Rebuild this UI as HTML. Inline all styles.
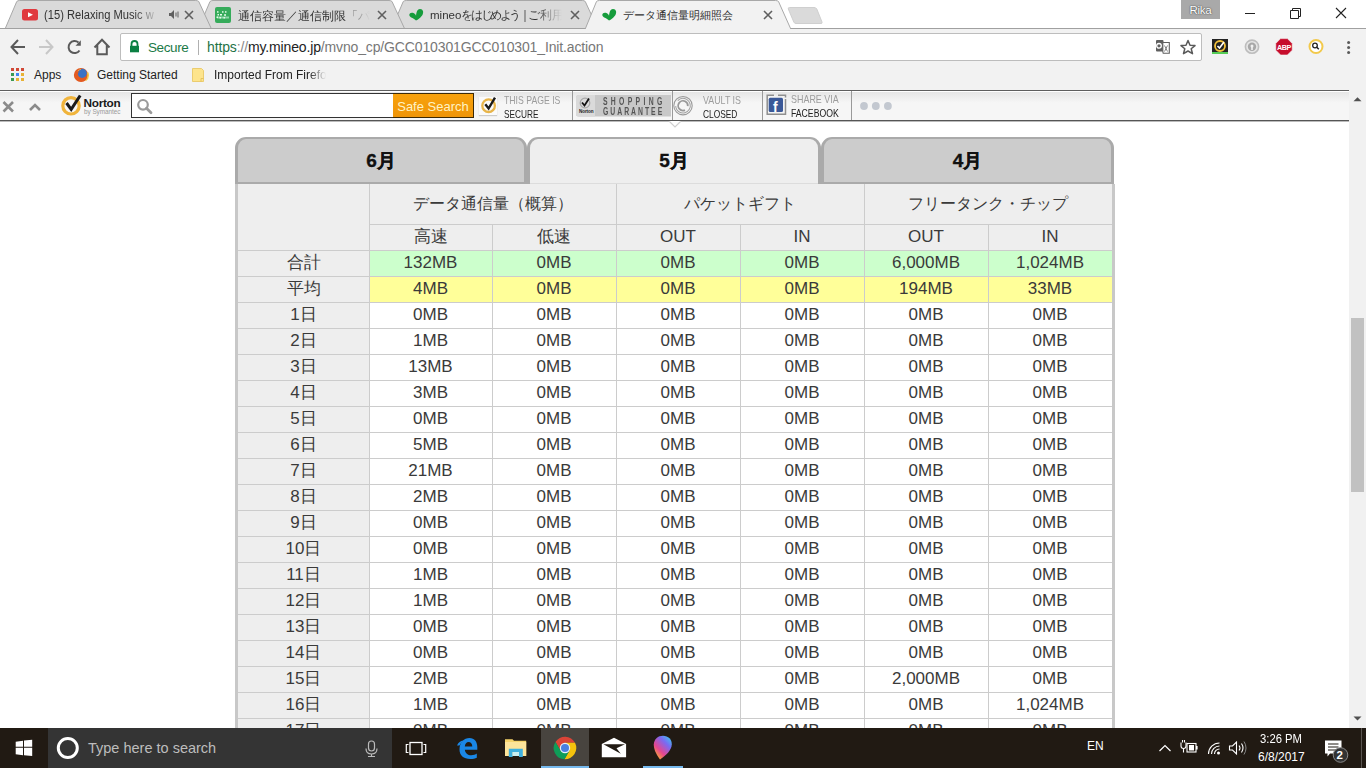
<!DOCTYPE html>
<html><head><meta charset="utf-8"><style>
*{margin:0;padding:0;box-sizing:border-box}
html,body{width:1366px;height:768px;overflow:hidden;background:#fff;font-family:"Liberation Sans", sans-serif}
.a{position:absolute}
.c{position:absolute;text-align:center;white-space:nowrap;color:#3a3a3a}
</style></head>
<body>
<div class="a" style="left:0;top:90px;width:1349px;height:638px;background:#fff"></div>
<div class="a" style="left:1349px;top:90px;width:17px;height:638px;background:#f1f1f1"></div>
<div class="a" style="left:1351px;top:318px;width:13px;height:174px;background:#c1c1c1"></div>
<div class="a" style="left:236px;top:184px;width:878px;height:66px;background:#eeeeee"></div>
<div class="a" style="left:238px;top:250px;width:131px;height:26px;background:#eeeeee"></div>
<div class="a" style="left:369px;top:250px;width:743px;height:26px;background:#ccffcc"></div>
<div class="a" style="left:238px;top:276px;width:131px;height:26px;background:#eeeeee"></div>
<div class="a" style="left:369px;top:276px;width:743px;height:26px;background:#ffff99"></div>
<div class="a" style="left:238px;top:302px;width:131px;height:26px;background:#eeeeee"></div>
<div class="a" style="left:369px;top:302px;width:743px;height:26px;background:#ffffff"></div>
<div class="a" style="left:238px;top:328px;width:131px;height:26px;background:#eeeeee"></div>
<div class="a" style="left:369px;top:328px;width:743px;height:26px;background:#ffffff"></div>
<div class="a" style="left:238px;top:354px;width:131px;height:26px;background:#eeeeee"></div>
<div class="a" style="left:369px;top:354px;width:743px;height:26px;background:#ffffff"></div>
<div class="a" style="left:238px;top:380px;width:131px;height:26px;background:#eeeeee"></div>
<div class="a" style="left:369px;top:380px;width:743px;height:26px;background:#ffffff"></div>
<div class="a" style="left:238px;top:406px;width:131px;height:26px;background:#eeeeee"></div>
<div class="a" style="left:369px;top:406px;width:743px;height:26px;background:#ffffff"></div>
<div class="a" style="left:238px;top:432px;width:131px;height:26px;background:#eeeeee"></div>
<div class="a" style="left:369px;top:432px;width:743px;height:26px;background:#ffffff"></div>
<div class="a" style="left:238px;top:458px;width:131px;height:26px;background:#eeeeee"></div>
<div class="a" style="left:369px;top:458px;width:743px;height:26px;background:#ffffff"></div>
<div class="a" style="left:238px;top:484px;width:131px;height:26px;background:#eeeeee"></div>
<div class="a" style="left:369px;top:484px;width:743px;height:26px;background:#ffffff"></div>
<div class="a" style="left:238px;top:510px;width:131px;height:26px;background:#eeeeee"></div>
<div class="a" style="left:369px;top:510px;width:743px;height:26px;background:#ffffff"></div>
<div class="a" style="left:238px;top:536px;width:131px;height:26px;background:#eeeeee"></div>
<div class="a" style="left:369px;top:536px;width:743px;height:26px;background:#ffffff"></div>
<div class="a" style="left:238px;top:562px;width:131px;height:26px;background:#eeeeee"></div>
<div class="a" style="left:369px;top:562px;width:743px;height:26px;background:#ffffff"></div>
<div class="a" style="left:238px;top:588px;width:131px;height:26px;background:#eeeeee"></div>
<div class="a" style="left:369px;top:588px;width:743px;height:26px;background:#ffffff"></div>
<div class="a" style="left:238px;top:614px;width:131px;height:26px;background:#eeeeee"></div>
<div class="a" style="left:369px;top:614px;width:743px;height:26px;background:#ffffff"></div>
<div class="a" style="left:238px;top:640px;width:131px;height:26px;background:#eeeeee"></div>
<div class="a" style="left:369px;top:640px;width:743px;height:26px;background:#ffffff"></div>
<div class="a" style="left:238px;top:666px;width:131px;height:26px;background:#eeeeee"></div>
<div class="a" style="left:369px;top:666px;width:743px;height:26px;background:#ffffff"></div>
<div class="a" style="left:238px;top:692px;width:131px;height:26px;background:#eeeeee"></div>
<div class="a" style="left:369px;top:692px;width:743px;height:26px;background:#ffffff"></div>
<div class="a" style="left:238px;top:718px;width:131px;height:26px;background:#eeeeee"></div>
<div class="a" style="left:369px;top:718px;width:743px;height:26px;background:#ffffff"></div>
<div class="a" style="left:238px;top:250px;width:874px;height:1px;background:#cccccc"></div>
<div class="a" style="left:238px;top:276px;width:874px;height:1px;background:#cccccc"></div>
<div class="a" style="left:238px;top:302px;width:874px;height:1px;background:#cccccc"></div>
<div class="a" style="left:238px;top:328px;width:874px;height:1px;background:#cccccc"></div>
<div class="a" style="left:238px;top:354px;width:874px;height:1px;background:#cccccc"></div>
<div class="a" style="left:238px;top:380px;width:874px;height:1px;background:#cccccc"></div>
<div class="a" style="left:238px;top:406px;width:874px;height:1px;background:#cccccc"></div>
<div class="a" style="left:238px;top:432px;width:874px;height:1px;background:#cccccc"></div>
<div class="a" style="left:238px;top:458px;width:874px;height:1px;background:#cccccc"></div>
<div class="a" style="left:238px;top:484px;width:874px;height:1px;background:#cccccc"></div>
<div class="a" style="left:238px;top:510px;width:874px;height:1px;background:#cccccc"></div>
<div class="a" style="left:238px;top:536px;width:874px;height:1px;background:#cccccc"></div>
<div class="a" style="left:238px;top:562px;width:874px;height:1px;background:#cccccc"></div>
<div class="a" style="left:238px;top:588px;width:874px;height:1px;background:#cccccc"></div>
<div class="a" style="left:238px;top:614px;width:874px;height:1px;background:#cccccc"></div>
<div class="a" style="left:238px;top:640px;width:874px;height:1px;background:#cccccc"></div>
<div class="a" style="left:238px;top:666px;width:874px;height:1px;background:#cccccc"></div>
<div class="a" style="left:238px;top:692px;width:874px;height:1px;background:#cccccc"></div>
<div class="a" style="left:238px;top:718px;width:874px;height:1px;background:#cccccc"></div>
<div class="a" style="left:369px;top:224px;width:743px;height:1px;background:#cccccc"></div>
<div class="a" style="left:369px;top:184px;width:1px;height:544px;background:#cccccc"></div>
<div class="a" style="left:492px;top:224px;width:1px;height:504px;background:#cccccc"></div>
<div class="a" style="left:616px;top:184px;width:1px;height:544px;background:#cccccc"></div>
<div class="a" style="left:740px;top:224px;width:1px;height:504px;background:#cccccc"></div>
<div class="a" style="left:864px;top:184px;width:1px;height:544px;background:#cccccc"></div>
<div class="a" style="left:988px;top:224px;width:1px;height:504px;background:#cccccc"></div>
<div class="a" style="left:235px;top:184px;width:3px;height:544px;background:#c8c8c8"></div>
<div class="a" style="left:1112px;top:184px;width:3px;height:544px;background:#c8c8c8"></div>
<div class="a" style="left:235px;top:137px;width:292px;height:47px;background:#cccccc;border:3px solid #aaaaaa;border-top-width:2px;border-bottom-width:2px;border-radius:11px 11px 0 0"></div>
<div class="c" style="left:235px;top:149px;width:292px;font-size:19px;line-height:24px;font-weight:bold;color:#111;-webkit-text-stroke:0.35px #111">6月</div>
<div class="a" style="left:527px;top:137px;width:294px;height:47px;background:#eeeeee;border:3px solid #aaaaaa;border-top-width:2px;border-bottom:none;border-radius:11px 11px 0 0"></div>
<div class="a" style="left:530px;top:183px;width:288px;height:1px;background:#dcdcdc"></div>
<div class="c" style="left:527px;top:149px;width:294px;font-size:19px;line-height:24px;font-weight:bold;color:#111;-webkit-text-stroke:0.35px #111">5月</div>
<div class="a" style="left:821px;top:137px;width:293px;height:47px;background:#cccccc;border:3px solid #aaaaaa;border-top-width:2px;border-bottom-width:2px;border-radius:11px 11px 0 0"></div>
<div class="c" style="left:821px;top:149px;width:293px;font-size:19px;line-height:24px;font-weight:bold;color:#111;-webkit-text-stroke:0.35px #111">4月</div>
<div class="c" style="left:369px;top:184px;width:247px;height:40px;line-height:40px;font-size:16px;">データ通信量（概算）</div>
<div class="c" style="left:616px;top:184px;width:248px;height:40px;line-height:40px;font-size:16px;">パケットギフト</div>
<div class="c" style="left:864px;top:184px;width:248px;height:40px;line-height:40px;font-size:16px;">フリータンク・チップ</div>
<div class="c" style="left:369px;top:224px;width:123px;height:26px;line-height:26px;font-size:17px;">高速</div>
<div class="c" style="left:492px;top:224px;width:124px;height:26px;line-height:26px;font-size:17px;">低速</div>
<div class="c" style="left:616px;top:224px;width:124px;height:26px;line-height:26px;font-size:17px;">OUT</div>
<div class="c" style="left:740px;top:224px;width:124px;height:26px;line-height:26px;font-size:17px;">IN</div>
<div class="c" style="left:864px;top:224px;width:124px;height:26px;line-height:26px;font-size:17px;">OUT</div>
<div class="c" style="left:988px;top:224px;width:124px;height:26px;line-height:26px;font-size:17px;">IN</div>
<div class="c" style="left:238px;top:250px;width:131px;height:26px;line-height:26px;font-size:17px;">合計</div>
<div class="c" style="left:369px;top:250px;width:123px;height:26px;line-height:26px;font-size:17px;">132MB</div>
<div class="c" style="left:492px;top:250px;width:124px;height:26px;line-height:26px;font-size:17px;">0MB</div>
<div class="c" style="left:616px;top:250px;width:124px;height:26px;line-height:26px;font-size:17px;">0MB</div>
<div class="c" style="left:740px;top:250px;width:124px;height:26px;line-height:26px;font-size:17px;">0MB</div>
<div class="c" style="left:864px;top:250px;width:124px;height:26px;line-height:26px;font-size:17px;">6,000MB</div>
<div class="c" style="left:988px;top:250px;width:124px;height:26px;line-height:26px;font-size:17px;">1,024MB</div>
<div class="c" style="left:238px;top:276px;width:131px;height:26px;line-height:26px;font-size:17px;">平均</div>
<div class="c" style="left:369px;top:276px;width:123px;height:26px;line-height:26px;font-size:17px;">4MB</div>
<div class="c" style="left:492px;top:276px;width:124px;height:26px;line-height:26px;font-size:17px;">0MB</div>
<div class="c" style="left:616px;top:276px;width:124px;height:26px;line-height:26px;font-size:17px;">0MB</div>
<div class="c" style="left:740px;top:276px;width:124px;height:26px;line-height:26px;font-size:17px;">0MB</div>
<div class="c" style="left:864px;top:276px;width:124px;height:26px;line-height:26px;font-size:17px;">194MB</div>
<div class="c" style="left:988px;top:276px;width:124px;height:26px;line-height:26px;font-size:17px;">33MB</div>
<div class="c" style="left:238px;top:302px;width:131px;height:26px;line-height:26px;font-size:17px;">1日</div>
<div class="c" style="left:369px;top:302px;width:123px;height:26px;line-height:26px;font-size:17px;">0MB</div>
<div class="c" style="left:492px;top:302px;width:124px;height:26px;line-height:26px;font-size:17px;">0MB</div>
<div class="c" style="left:616px;top:302px;width:124px;height:26px;line-height:26px;font-size:17px;">0MB</div>
<div class="c" style="left:740px;top:302px;width:124px;height:26px;line-height:26px;font-size:17px;">0MB</div>
<div class="c" style="left:864px;top:302px;width:124px;height:26px;line-height:26px;font-size:17px;">0MB</div>
<div class="c" style="left:988px;top:302px;width:124px;height:26px;line-height:26px;font-size:17px;">0MB</div>
<div class="c" style="left:238px;top:328px;width:131px;height:26px;line-height:26px;font-size:17px;">2日</div>
<div class="c" style="left:369px;top:328px;width:123px;height:26px;line-height:26px;font-size:17px;">1MB</div>
<div class="c" style="left:492px;top:328px;width:124px;height:26px;line-height:26px;font-size:17px;">0MB</div>
<div class="c" style="left:616px;top:328px;width:124px;height:26px;line-height:26px;font-size:17px;">0MB</div>
<div class="c" style="left:740px;top:328px;width:124px;height:26px;line-height:26px;font-size:17px;">0MB</div>
<div class="c" style="left:864px;top:328px;width:124px;height:26px;line-height:26px;font-size:17px;">0MB</div>
<div class="c" style="left:988px;top:328px;width:124px;height:26px;line-height:26px;font-size:17px;">0MB</div>
<div class="c" style="left:238px;top:354px;width:131px;height:26px;line-height:26px;font-size:17px;">3日</div>
<div class="c" style="left:369px;top:354px;width:123px;height:26px;line-height:26px;font-size:17px;">13MB</div>
<div class="c" style="left:492px;top:354px;width:124px;height:26px;line-height:26px;font-size:17px;">0MB</div>
<div class="c" style="left:616px;top:354px;width:124px;height:26px;line-height:26px;font-size:17px;">0MB</div>
<div class="c" style="left:740px;top:354px;width:124px;height:26px;line-height:26px;font-size:17px;">0MB</div>
<div class="c" style="left:864px;top:354px;width:124px;height:26px;line-height:26px;font-size:17px;">0MB</div>
<div class="c" style="left:988px;top:354px;width:124px;height:26px;line-height:26px;font-size:17px;">0MB</div>
<div class="c" style="left:238px;top:380px;width:131px;height:26px;line-height:26px;font-size:17px;">4日</div>
<div class="c" style="left:369px;top:380px;width:123px;height:26px;line-height:26px;font-size:17px;">3MB</div>
<div class="c" style="left:492px;top:380px;width:124px;height:26px;line-height:26px;font-size:17px;">0MB</div>
<div class="c" style="left:616px;top:380px;width:124px;height:26px;line-height:26px;font-size:17px;">0MB</div>
<div class="c" style="left:740px;top:380px;width:124px;height:26px;line-height:26px;font-size:17px;">0MB</div>
<div class="c" style="left:864px;top:380px;width:124px;height:26px;line-height:26px;font-size:17px;">0MB</div>
<div class="c" style="left:988px;top:380px;width:124px;height:26px;line-height:26px;font-size:17px;">0MB</div>
<div class="c" style="left:238px;top:406px;width:131px;height:26px;line-height:26px;font-size:17px;">5日</div>
<div class="c" style="left:369px;top:406px;width:123px;height:26px;line-height:26px;font-size:17px;">0MB</div>
<div class="c" style="left:492px;top:406px;width:124px;height:26px;line-height:26px;font-size:17px;">0MB</div>
<div class="c" style="left:616px;top:406px;width:124px;height:26px;line-height:26px;font-size:17px;">0MB</div>
<div class="c" style="left:740px;top:406px;width:124px;height:26px;line-height:26px;font-size:17px;">0MB</div>
<div class="c" style="left:864px;top:406px;width:124px;height:26px;line-height:26px;font-size:17px;">0MB</div>
<div class="c" style="left:988px;top:406px;width:124px;height:26px;line-height:26px;font-size:17px;">0MB</div>
<div class="c" style="left:238px;top:432px;width:131px;height:26px;line-height:26px;font-size:17px;">6日</div>
<div class="c" style="left:369px;top:432px;width:123px;height:26px;line-height:26px;font-size:17px;">5MB</div>
<div class="c" style="left:492px;top:432px;width:124px;height:26px;line-height:26px;font-size:17px;">0MB</div>
<div class="c" style="left:616px;top:432px;width:124px;height:26px;line-height:26px;font-size:17px;">0MB</div>
<div class="c" style="left:740px;top:432px;width:124px;height:26px;line-height:26px;font-size:17px;">0MB</div>
<div class="c" style="left:864px;top:432px;width:124px;height:26px;line-height:26px;font-size:17px;">0MB</div>
<div class="c" style="left:988px;top:432px;width:124px;height:26px;line-height:26px;font-size:17px;">0MB</div>
<div class="c" style="left:238px;top:458px;width:131px;height:26px;line-height:26px;font-size:17px;">7日</div>
<div class="c" style="left:369px;top:458px;width:123px;height:26px;line-height:26px;font-size:17px;">21MB</div>
<div class="c" style="left:492px;top:458px;width:124px;height:26px;line-height:26px;font-size:17px;">0MB</div>
<div class="c" style="left:616px;top:458px;width:124px;height:26px;line-height:26px;font-size:17px;">0MB</div>
<div class="c" style="left:740px;top:458px;width:124px;height:26px;line-height:26px;font-size:17px;">0MB</div>
<div class="c" style="left:864px;top:458px;width:124px;height:26px;line-height:26px;font-size:17px;">0MB</div>
<div class="c" style="left:988px;top:458px;width:124px;height:26px;line-height:26px;font-size:17px;">0MB</div>
<div class="c" style="left:238px;top:484px;width:131px;height:26px;line-height:26px;font-size:17px;">8日</div>
<div class="c" style="left:369px;top:484px;width:123px;height:26px;line-height:26px;font-size:17px;">2MB</div>
<div class="c" style="left:492px;top:484px;width:124px;height:26px;line-height:26px;font-size:17px;">0MB</div>
<div class="c" style="left:616px;top:484px;width:124px;height:26px;line-height:26px;font-size:17px;">0MB</div>
<div class="c" style="left:740px;top:484px;width:124px;height:26px;line-height:26px;font-size:17px;">0MB</div>
<div class="c" style="left:864px;top:484px;width:124px;height:26px;line-height:26px;font-size:17px;">0MB</div>
<div class="c" style="left:988px;top:484px;width:124px;height:26px;line-height:26px;font-size:17px;">0MB</div>
<div class="c" style="left:238px;top:510px;width:131px;height:26px;line-height:26px;font-size:17px;">9日</div>
<div class="c" style="left:369px;top:510px;width:123px;height:26px;line-height:26px;font-size:17px;">0MB</div>
<div class="c" style="left:492px;top:510px;width:124px;height:26px;line-height:26px;font-size:17px;">0MB</div>
<div class="c" style="left:616px;top:510px;width:124px;height:26px;line-height:26px;font-size:17px;">0MB</div>
<div class="c" style="left:740px;top:510px;width:124px;height:26px;line-height:26px;font-size:17px;">0MB</div>
<div class="c" style="left:864px;top:510px;width:124px;height:26px;line-height:26px;font-size:17px;">0MB</div>
<div class="c" style="left:988px;top:510px;width:124px;height:26px;line-height:26px;font-size:17px;">0MB</div>
<div class="c" style="left:238px;top:536px;width:131px;height:26px;line-height:26px;font-size:17px;">10日</div>
<div class="c" style="left:369px;top:536px;width:123px;height:26px;line-height:26px;font-size:17px;">0MB</div>
<div class="c" style="left:492px;top:536px;width:124px;height:26px;line-height:26px;font-size:17px;">0MB</div>
<div class="c" style="left:616px;top:536px;width:124px;height:26px;line-height:26px;font-size:17px;">0MB</div>
<div class="c" style="left:740px;top:536px;width:124px;height:26px;line-height:26px;font-size:17px;">0MB</div>
<div class="c" style="left:864px;top:536px;width:124px;height:26px;line-height:26px;font-size:17px;">0MB</div>
<div class="c" style="left:988px;top:536px;width:124px;height:26px;line-height:26px;font-size:17px;">0MB</div>
<div class="c" style="left:238px;top:562px;width:131px;height:26px;line-height:26px;font-size:17px;">11日</div>
<div class="c" style="left:369px;top:562px;width:123px;height:26px;line-height:26px;font-size:17px;">1MB</div>
<div class="c" style="left:492px;top:562px;width:124px;height:26px;line-height:26px;font-size:17px;">0MB</div>
<div class="c" style="left:616px;top:562px;width:124px;height:26px;line-height:26px;font-size:17px;">0MB</div>
<div class="c" style="left:740px;top:562px;width:124px;height:26px;line-height:26px;font-size:17px;">0MB</div>
<div class="c" style="left:864px;top:562px;width:124px;height:26px;line-height:26px;font-size:17px;">0MB</div>
<div class="c" style="left:988px;top:562px;width:124px;height:26px;line-height:26px;font-size:17px;">0MB</div>
<div class="c" style="left:238px;top:588px;width:131px;height:26px;line-height:26px;font-size:17px;">12日</div>
<div class="c" style="left:369px;top:588px;width:123px;height:26px;line-height:26px;font-size:17px;">1MB</div>
<div class="c" style="left:492px;top:588px;width:124px;height:26px;line-height:26px;font-size:17px;">0MB</div>
<div class="c" style="left:616px;top:588px;width:124px;height:26px;line-height:26px;font-size:17px;">0MB</div>
<div class="c" style="left:740px;top:588px;width:124px;height:26px;line-height:26px;font-size:17px;">0MB</div>
<div class="c" style="left:864px;top:588px;width:124px;height:26px;line-height:26px;font-size:17px;">0MB</div>
<div class="c" style="left:988px;top:588px;width:124px;height:26px;line-height:26px;font-size:17px;">0MB</div>
<div class="c" style="left:238px;top:614px;width:131px;height:26px;line-height:26px;font-size:17px;">13日</div>
<div class="c" style="left:369px;top:614px;width:123px;height:26px;line-height:26px;font-size:17px;">0MB</div>
<div class="c" style="left:492px;top:614px;width:124px;height:26px;line-height:26px;font-size:17px;">0MB</div>
<div class="c" style="left:616px;top:614px;width:124px;height:26px;line-height:26px;font-size:17px;">0MB</div>
<div class="c" style="left:740px;top:614px;width:124px;height:26px;line-height:26px;font-size:17px;">0MB</div>
<div class="c" style="left:864px;top:614px;width:124px;height:26px;line-height:26px;font-size:17px;">0MB</div>
<div class="c" style="left:988px;top:614px;width:124px;height:26px;line-height:26px;font-size:17px;">0MB</div>
<div class="c" style="left:238px;top:640px;width:131px;height:26px;line-height:26px;font-size:17px;">14日</div>
<div class="c" style="left:369px;top:640px;width:123px;height:26px;line-height:26px;font-size:17px;">0MB</div>
<div class="c" style="left:492px;top:640px;width:124px;height:26px;line-height:26px;font-size:17px;">0MB</div>
<div class="c" style="left:616px;top:640px;width:124px;height:26px;line-height:26px;font-size:17px;">0MB</div>
<div class="c" style="left:740px;top:640px;width:124px;height:26px;line-height:26px;font-size:17px;">0MB</div>
<div class="c" style="left:864px;top:640px;width:124px;height:26px;line-height:26px;font-size:17px;">0MB</div>
<div class="c" style="left:988px;top:640px;width:124px;height:26px;line-height:26px;font-size:17px;">0MB</div>
<div class="c" style="left:238px;top:666px;width:131px;height:26px;line-height:26px;font-size:17px;">15日</div>
<div class="c" style="left:369px;top:666px;width:123px;height:26px;line-height:26px;font-size:17px;">2MB</div>
<div class="c" style="left:492px;top:666px;width:124px;height:26px;line-height:26px;font-size:17px;">0MB</div>
<div class="c" style="left:616px;top:666px;width:124px;height:26px;line-height:26px;font-size:17px;">0MB</div>
<div class="c" style="left:740px;top:666px;width:124px;height:26px;line-height:26px;font-size:17px;">0MB</div>
<div class="c" style="left:864px;top:666px;width:124px;height:26px;line-height:26px;font-size:17px;">2,000MB</div>
<div class="c" style="left:988px;top:666px;width:124px;height:26px;line-height:26px;font-size:17px;">0MB</div>
<div class="c" style="left:238px;top:692px;width:131px;height:26px;line-height:26px;font-size:17px;">16日</div>
<div class="c" style="left:369px;top:692px;width:123px;height:26px;line-height:26px;font-size:17px;">1MB</div>
<div class="c" style="left:492px;top:692px;width:124px;height:26px;line-height:26px;font-size:17px;">0MB</div>
<div class="c" style="left:616px;top:692px;width:124px;height:26px;line-height:26px;font-size:17px;">0MB</div>
<div class="c" style="left:740px;top:692px;width:124px;height:26px;line-height:26px;font-size:17px;">0MB</div>
<div class="c" style="left:864px;top:692px;width:124px;height:26px;line-height:26px;font-size:17px;">0MB</div>
<div class="c" style="left:988px;top:692px;width:124px;height:26px;line-height:26px;font-size:17px;">1,024MB</div>
<div class="c" style="left:238px;top:718px;width:131px;height:26px;line-height:26px;font-size:17px;">17日</div>
<div class="c" style="left:369px;top:718px;width:123px;height:26px;line-height:26px;font-size:17px;">0MB</div>
<div class="c" style="left:492px;top:718px;width:124px;height:26px;line-height:26px;font-size:17px;">0MB</div>
<div class="c" style="left:616px;top:718px;width:124px;height:26px;line-height:26px;font-size:17px;">0MB</div>
<div class="c" style="left:740px;top:718px;width:124px;height:26px;line-height:26px;font-size:17px;">0MB</div>
<div class="c" style="left:864px;top:718px;width:124px;height:26px;line-height:26px;font-size:17px;">0MB</div>
<div class="c" style="left:988px;top:718px;width:124px;height:26px;line-height:26px;font-size:17px;">0MB</div>
<div class="a" style="left:0;top:89px;width:1349px;height:32px;background:linear-gradient(#e4e4e4,#f6f6f6 40%,#f6f6f6);border-top:2px solid #5e5e5e;border-bottom:1px solid #555;box-shadow:0 1px 0 #bbb, inset 0 1px 0 #fff"></div>
<svg class="a" style="left:0;top:89px" width="900" height="40"><path d="M3.5,13L13,22.5M13,13L3.5,22.5" stroke="#8b8b8b" stroke-width="2.6"/><path d="M30,21L35,16L40,21" stroke="#8b8b8b" stroke-width="2.6" fill="none"/><circle cx="71" cy="16.8" r="8.2" fill="none" stroke="#f0b43c" stroke-width="3.2"/><path d="M66.5,14L71.2,20.3L80.2,6.5" stroke="#1a1a1a" stroke-width="3" fill="none" stroke-linejoin="miter"/><text x="83.5" y="18" font-family="Liberation Sans" font-weight="bold" font-size="11.8" fill="#1a1a1a" letter-spacing="-0.3">Norton</text><text x="84" y="24.8" font-family="Liberation Sans" font-size="6.4" fill="#9a9a9a" letter-spacing="-0.05">by Symantec</text><circle cx="489" cy="16.5" r="6.5" fill="none" stroke="#e8b54a" stroke-width="2.3"/><path d="M485.5,15L489,19.5L495.5,8.7" stroke="#1a1a1a" stroke-width="2.4" fill="none"/><line x1="572.5" y1="2" x2="572.5" y2="31" stroke="#9a9a9a"/><line x1="672.5" y1="2" x2="672.5" y2="31" stroke="#9a9a9a"/><line x1="762.5" y1="2" x2="762.5" y2="31" stroke="#9a9a9a"/><line x1="851.5" y1="2" x2="851.5" y2="31" stroke="#9a9a9a"/><path d="M576,8.5Q576,6 578.5,6H671V27.5H578.5Q576,27.5 576,25Z" fill="#c8c8c8"/><path d="M576,8.5Q576,6 578.5,6H595V27.5H578.5Q576,27.5 576,25Z" fill="#dadada"/><circle cx="585" cy="14" r="4.8" fill="none" stroke="#a8a8a8" stroke-width="1.2"/><path d="M582,13.5L584.5,16.5L589,9.5" stroke="#111" stroke-width="1.8" fill="none"/><text x="579" y="24.3" font-family="Liberation Sans" font-weight="bold" font-size="4.6" fill="#222" letter-spacing="-0.1">Norton</text><circle cx="683" cy="16.7" r="9.2" fill="none" stroke="#9a9a9a" stroke-width="1.1"/><circle cx="683" cy="16.7" r="7.3" fill="none" stroke="#a0a0a0" stroke-width="1" stroke-dasharray="30 6" transform="rotate(-60 683 16.7)"/><circle cx="683" cy="16.7" r="4.8" fill="none" stroke="#999" stroke-width="1.8" stroke-dasharray="20 5" transform="rotate(120 683 16.7)"/><path d="M774,6.3H767.2V25.2H785.5V10M778,6.3H785.5V8.5" stroke="#8f8f8f" stroke-width="1.5" fill="#f4f4f4"/><rect x="768.7" y="8.7" width="14.3" height="14.3" rx="1.5" fill="#3b5998"/><text x="773" y="22.5" font-family="Liberation Sans" font-weight="bold" font-size="14" fill="#fff">f</text><circle cx="864" cy="17" r="3.9" fill="#c3c8d0"/><circle cx="875.8" cy="17" r="3.9" fill="#c3c8d0"/><circle cx="887.9" cy="17" r="3.9" fill="#c3c8d0"/></svg>
<div class="a" style="left:131px;top:93px;width:263px;height:25px;background:#fff;border:1.5px solid #333"></div>
<svg class="a" style="left:136px;top:98px" width="18" height="18"><circle cx="7" cy="6.8" r="4.8" fill="none" stroke="#9a9a9a" stroke-width="2.2"/><path d="M10.5,10.3L15,14.8" stroke="#9a9a9a" stroke-width="2.8" stroke-linecap="round"/></svg>
<div class="a" style="left:393px;top:93px;width:81px;height:25px;background:linear-gradient(#f8a20c,#ef9509);border:1.5px solid #3d2a05;border-left:none;color:#fff3c4;font-size:13px;line-height:25px;text-align:center;white-space:nowrap">Safe Search</div>
<div class="a" style="left:479px;top:97px;width:18px;height:18px;background:#fbfbfb;box-shadow:0 1px 1px #ccc"></div>
<svg class="a" style="left:479px;top:89px" width="20" height="30"><circle cx="9.6" cy="16.7" r="6.3" fill="none" stroke="#e8b54a" stroke-width="2.3"/><path d="M6.3,15.3L9.6,19.5L16,8.7" stroke="#1a1a1a" stroke-width="2.4" fill="none"/></svg>
<div class="a" style="left:504px;top:94.5px;font-size:10.5px;line-height:10.5px;color:#9c9c9c;white-space:nowrap;transform:scaleX(0.829);transform-origin:0 0;">THIS PAGE IS</div>
<div class="a" style="left:504px;top:108.5px;font-size:10.5px;line-height:10.5px;color:#222;white-space:nowrap;transform:scaleX(0.787);transform-origin:0 0;">SECURE</div>
<div class="a" style="left:703px;top:94.5px;font-size:10.5px;line-height:10.5px;color:#9c9c9c;white-space:nowrap;transform:scaleX(0.846);transform-origin:0 0;">VAULT IS</div>
<div class="a" style="left:703px;top:108.5px;font-size:10.5px;line-height:10.5px;color:#222;white-space:nowrap;transform:scaleX(0.797);transform-origin:0 0;">CLOSED</div>
<div class="a" style="left:791px;top:93.5px;font-size:10.5px;line-height:10.5px;color:#9c9c9c;white-space:nowrap;transform:scaleX(0.852);transform-origin:0 0;">SHARE VIA</div>
<div class="a" style="left:791px;top:107.5px;font-size:10.5px;line-height:10.5px;color:#222;white-space:nowrap;transform:scaleX(0.826);transform-origin:0 0;">FACEBOOK</div>
<div class="a" style="left:602.6px;top:96px;font-size:10.5px;line-height:10.5px;font-weight:bold;color:#555;letter-spacing:5.1px;transform:scaleX(0.65);transform-origin:0 0;white-space:nowrap">SHOPPING</div>
<div class="a" style="left:602.6px;top:105.5px;font-size:10.5px;line-height:10.5px;font-weight:bold;color:#555;letter-spacing:3.07px;transform:scaleX(0.65);transform-origin:0 0;white-space:nowrap">GUARANTEE</div>
<svg class="a" style="left:668px;top:121px" width="14" height="8"><path d="M1,0L7,6L13,0" fill="#fff" stroke="#cfcfcf" stroke-width="1.2"/></svg>
<svg class="a" style="left:1349px;top:90px" width="17" height="638"><path d="M4.5,11.3L8.5,7.3L12.5,11.3Z" fill="#505050"/><path d="M4.5,626.5L8.5,630.5L12.5,626.5Z" fill="#505050"/></svg>
<div class="a" style="left:0;top:728px;width:1366px;height:40px;background:#211a13"></div>
<div class="a" style="left:48px;top:728px;width:344px;height:40px;background:#343434"></div>
<svg class="a" style="left:0;top:728px" width="1366" height="40"><path d="M15.7,13.7L23,12.8V18.8H15.7Z M24,12.6L32.2,11.7V18.8H24Z M15.7,19.8H23V27.2L15.7,26.3Z M24,19.8H32.2V28.1L24,27.3Z" fill="#fff"/><circle cx="67.8" cy="20" r="9.5" fill="none" stroke="#fff" stroke-width="3"/><rect x="368.5" y="13" width="6" height="10" rx="3" fill="none" stroke="#bbb" stroke-width="1.2"/><path d="M366,20.5Q366,26 371.5,26Q377,26 377,20.5M371.5,26V28.5M368,28.5H375" stroke="#bbb" stroke-width="1.2" fill="none"/><rect x="410" y="14.5" width="12" height="12" fill="none" stroke="#fff" stroke-width="1.3"/><path d="M408.5,16.5H406.3V24.5H408.5M423.5,16.5H425.7V24.5H423.5" stroke="#fff" stroke-width="1.2" fill="none"/><g transform="translate(457,9)"><path fill-rule="evenodd" d="M2.5,12.5C2.5,5.5 7,1 12.5,1C17.5,1 20.3,4.8 20.3,10V12.8H7.8C8.2,16.3 10.8,18.3 14.3,18.3C16.5,18.3 18.5,17.5 19.8,16.6V20.8C18.2,21.6 16,22 13.3,22C6.5,22 2.5,18.3 2.5,12.5Z M7.8,9.6H15.3C15.2,6.8 13.8,5.1 11.5,5.1C9.5,5.1 8.2,6.8 7.8,9.6Z" fill="#1a87e6"/><path d="M0,8.5C1.5,5 4.5,3.3 8,3.6C5.5,4.8 3.6,6.3 2.5,8.6Z" fill="#1a87e6"/></g><path d="M505,11.2H512.5L514,12.8H526.2V28H505Z" fill="#f6d36a"/><path d="M505,14H526.2V28H505Z" fill="#fde49a"/><path d="M508.8,20.8H522.8V29H519V24H512.6V29H508.8Z" fill="#3fb0de"/><rect x="512.6" y="24" width="6.4" height="4" fill="#c9eef0"/><rect x="541" y="0" width="48" height="40" fill="#48443f"/><rect x="541" y="38" width="48" height="2" fill="#76b9ed"/><path d="M565,20L560.50,22.60L555.48,13.91A11.3,11.3 0 0 1 575.03,14.80L565.00,14.80Z" fill="#db4437"/><path d="M565,20L565.00,14.80L575.03,14.80A11.3,11.3 0 0 1 564.49,31.29L569.50,22.60Z" fill="#f4c20d"/><path d="M565,20L569.50,22.60L564.49,31.29A11.3,11.3 0 0 1 555.48,13.91L560.50,22.60Z" fill="#0f9d58"/><circle cx="565" cy="20" r="5.2" fill="#e8f0f8"/><circle cx="565" cy="20" r="4" fill="#4a80e0"/><path d="M601.8,16L614,9.8L626.1,16V29.2H601.8Z" fill="#fff"/><path d="M603.4,16.2L624.9,16.2L616.5,20.2L620.8,25.8Z" fill="#211a13"/><defs><linearGradient id="p3d" x1="1" y1="0" x2="0.2" y2="1"><stop offset="0" stop-color="#30d8ee"/><stop offset="0.35" stop-color="#7a6af2"/><stop offset="0.7" stop-color="#e6458f"/><stop offset="1" stop-color="#f7b52a"/></linearGradient></defs><path d="M660,31.5C655.5,25.5 653.6,20.5 653.8,16.3C654.2,11 658,7.8 663,7.8C668.3,7.8 672,11.5 671.8,16.5C671.5,22 666.5,27 660,31.5Z" fill="url(#p3d)"/><rect x="643" y="38" width="40" height="2" fill="#76b9ed"/><path d="M1159.5,23L1165,17.5L1170.5,23" stroke="#fff" stroke-width="1.2" fill="none"/><path d="M1181,14.5V18Q1181,20.5 1183.5,20.5Q1186,20.5 1186,18V14.5M1182.5,14.5V12M1184.5,14.5V12M1183.5,20.5V24.5" stroke="#fff" stroke-width="1.1" fill="none"/><rect x="1187" y="15.5" width="9" height="8.5" fill="none" stroke="#fff" stroke-width="1.1"/><rect x="1189" y="17" width="5" height="5.5" fill="#fff"/><rect x="1196" y="18" width="1.6" height="3.5" fill="#fff"/><path d="M1208.5,26A11,11 0 0 1 1219.5,15M1211.5,26A8,8 0 0 1 1219.5,18M1214.5,26A5,5 0 0 1 1219.5,21" stroke="#fff" stroke-width="1.1" fill="none"/><circle cx="1218.5" cy="25" r="1.5" fill="#fff"/><path d="M1229.5,18H1232.5L1236.5,14V26L1232.5,22H1229.5Z" stroke="#fff" stroke-width="1.1" fill="none"/><path d="M1239,17.5Q1241,20 1239,22.5M1241.5,15.5Q1244.5,20 1241.5,24.5" stroke="#fff" stroke-width="1.1" fill="none"/><path d="M1244,13.5Q1248,20 1244,26.5" stroke="#888" stroke-width="1" fill="none"/><path d="M1325,12.5H1341.5V25.5H1330L1327.5,28.5V25.5H1325Z" fill="#fff"/><path d="M1328,16H1338.5M1328,19H1338.5M1328,22H1336" stroke="#211a13" stroke-width="1.1"/><circle cx="1340.5" cy="27" r="7.3" fill="#333" stroke="#888" stroke-width="1"/><text x="1336.6" y="31.3" font-family="Liberation Sans" font-weight="bold" font-size="11.5" fill="#fff">2</text><line x1="1361.5" y1="0" x2="1361.5" y2="40" stroke="#5a5550" stroke-width="1"/></svg>
<div class="a" style="left:88px;top:740px;font-size:14.5px;line-height:16.5px;color:#bdbdbd;white-space:nowrap;">Type here to search</div>
<div class="a" style="left:1087px;top:739px;font-size:12px;line-height:14px;color:#fff;white-space:nowrap;">EN</div>
<div class="a" style="left:1259.5px;top:731.5px;font-size:12px;line-height:14px;color:#fff;white-space:nowrap;transform:scaleX(0.94);transform-origin:0 0">3:26 PM</div>
<div class="a" style="left:1258px;top:749.5px;font-size:12px;line-height:14px;color:#fff;white-space:nowrap;">6/8/2017</div>
<div class="a" style="left:0;top:0;width:1366px;height:29px;background:#fff"></div>
<svg class="a" style="left:0;top:0" width="1366" height="29"><path d="M391.75,28.5 L403.25,1.5 Q404.25,0.5 406.25,0.5 L582.25,0.5 Q584.25,0.5 585.25,1.5 L597.75,28.5 Z" fill="#dadada" stroke="#a8a8a8" stroke-width="1"/><path d="M198.50,28.5 L210.00,1.5 Q211.00,0.5 213.00,0.5 L389.00,0.5 Q391.00,0.5 392.00,1.5 L404.50,28.5 Z" fill="#dadada" stroke="#a8a8a8" stroke-width="1"/><path d="M5.25,28.5 L16.75,1.5 Q17.75,0.5 19.75,0.5 L195.75,0.5 Q197.75,0.5 198.75,1.5 L211.25,28.5 Z" fill="#dadada" stroke="#a8a8a8" stroke-width="1"/><line x1="0" y1="28.5" x2="1366" y2="28.5" stroke="#a0a0a0" stroke-width="1"/><path d="M585.00,29.5 L596.50,1.5 Q597.50,0.5 599.50,0.5 L775.50,0.5 Q777.50,0.5 778.50,1.5 L791.00,29.5 Z" fill="#f2f2f2" stroke="#a8a8a8" stroke-width="1"/><path d="M789.5,7.5 L814,7.5 Q816,7.5 816.8,9 L822,22 Q822.5,23.5 821,23.5 L796,23.5 Q794.5,23.5 793.8,22 L788.3,9 Q787.8,7.5 789.5,7.5Z" fill="#dadada" stroke="#cfcfcf" stroke-width="1"/></svg>
<div class="a" style="left:0;top:29px;width:1366px;height:61px;background:#f2f2f2"></div>
<svg class="a" style="left:22px;top:9px" width="16" height="12"><rect x="0" y="0" width="16" height="11.5" rx="2.5" fill="#e0393e"/><path d="M6,3.2L11,5.75L6,8.3Z" fill="#fff"/></svg>
<div class="a" style="left:44px;top:6.5px;font-size:12px;line-height:16px;color:#333;white-space:nowrap;width:124px;overflow:hidden;transform:scaleX(0.93);transform-origin:0 0;-webkit-mask-image:linear-gradient(90deg,#000 78%,transparent)">(15) Relaxing Music w</div>
<svg class="a" style="left:169px;top:10px" width="10" height="9"><path d="M0,3L2,3L5,0L5,9L2,6L0,6Z" fill="#5f5f5f"/><path d="M7,2.5L7,6.5M9,1.5L9,7.5" stroke="#5f5f5f" stroke-width="1"/></svg>
<svg class="a" style="left:184px;top:10px" width="10" height="10"><path d="M1,1L9,9M9,1L1,9" stroke="#5f5f5f" stroke-width="1.6"/></svg>
<svg class="a" style="left:215px;top:7px" width="16" height="16"><rect x="0" y="0" width="16" height="16" rx="2" fill="#35ab5a"/><rect x="2" y="9.5" width="12" height="2" fill="#8fd6a8"/><g fill="#e4fbe8"><rect x="2" y="4.2" width="1.5" height="1.5"/><rect x="7" y="4.2" width="1.5" height="1.5"/><rect x="10" y="4.2" width="1.5" height="1.5"/><rect x="2.5" y="7" width="1.5" height="1.5"/><rect x="5" y="7" width="2" height="1.5"/><rect x="9.3" y="7" width="1.5" height="2"/><rect x="1.5" y="9.5" width="1.5" height="1.5"/><rect x="4.5" y="10" width="1.5" height="1.5"/><rect x="8.5" y="10" width="1.5" height="1.5"/></g></svg>
<div class="a" style="left:238px;top:7.5px;font-size:12px;line-height:16px;color:#333;white-space:nowrap;width:132px;overflow:hidden;-webkit-mask-image:linear-gradient(90deg,#000 80%,transparent)">通信容量／通信制限「パケット</div>
<svg class="a" style="left:377px;top:10px" width="10" height="10"><path d="M1,1L9,9M9,1L1,9" stroke="#5f5f5f" stroke-width="1.6"/></svg>
<svg class="a" style="left:409px;top:8px" width="15" height="14"><path d="M7,12.6C5,9.8 0.2,10 0.3,6.8C0.5,4.3 4,4 6,6.1C7.6,7.8 7.9,10.2 7,12.6Z M7.2,12.6C6.8,9 7,4.2 8.6,2.2C10.2,0.4 13.6,0.8 14.1,3.6C14.6,7.2 11,10.6 7.2,12.6Z" fill="#169c3c"/></svg>
<div class="a" style="left:430px;top:7.5px;font-size:11.5px;line-height:15.5px;color:#333;white-space:nowrap;width:132px;overflow:hidden;-webkit-mask-image:linear-gradient(90deg,#000 80%,transparent)">mineo<span style="letter-spacing:-2.4px">をはじめよう</span><span style="letter-spacing:-3px">｜</span>ご利用する</div>
<svg class="a" style="left:570px;top:10px" width="10" height="10"><path d="M1,1L9,9M9,1L1,9" stroke="#5f5f5f" stroke-width="1.6"/></svg>
<svg class="a" style="left:602px;top:8px" width="15" height="14"><path d="M7,12.6C5,9.8 0.2,10 0.3,6.8C0.5,4.3 4,4 6,6.1C7.6,7.8 7.9,10.2 7,12.6Z M7.2,12.6C6.8,9 7,4.2 8.6,2.2C10.2,0.4 13.6,0.8 14.1,3.6C14.6,7.2 11,10.6 7.2,12.6Z" fill="#169c3c"/></svg>
<div class="a" style="left:623px;top:7.5px;font-size:11px;line-height:15px;color:#333;white-space:nowrap;">データ通信量明細照会</div>
<svg class="a" style="left:763px;top:10px" width="10" height="10"><path d="M1,1L9,9M9,1L1,9" stroke="#5f5f5f" stroke-width="1.6"/></svg>
<div class="a" style="left:1181px;top:0;width:39px;height:19px;background:#a9a9a9;color:#fff;font-size:11.5px;line-height:20px;text-align:center;letter-spacing:-0.3px;text-shadow:0 0 1.5px #444,0 0 1px #555">Rika</div>
<svg class="a" style="left:1240px;top:4px" width="120" height="20"><path d="M5,9.5H15" stroke="#222" stroke-width="1"/><path d="M50.5,6.5H58.5V14.5H50.5Z M52.5,6.5V4.5H60.5V12.5H58.5" stroke="#222" stroke-width="1" fill="none"/><path d="M96,4L106,14M106,4L96,14" stroke="#222" stroke-width="1.1"/></svg>
<svg class="a" style="left:0;top:29px" width="130" height="33"><path d="M11.5,18H25M18,11L11.5,18L18,25" stroke="#5a5a5a" stroke-width="2" fill="none"/><path d="M39,18H52.5M46,11L52.5,18L46,25" stroke="#c8c8c8" stroke-width="2" fill="none"/><path d="M79.5,21.5 A6,6 0 1 1 78.5,13.5" stroke="#5a5a5a" stroke-width="2" fill="none"/><path d="M75.5,16.8L80.8,16.8L80.8,11.2Z" fill="#5a5a5a"/><path d="M94.5,18.5L102,10.8L109.5,18.5M97.3,16V25.3H106.8V16" stroke="#5a5a5a" stroke-width="2" fill="none" stroke-linejoin="miter"/></svg>
<div class="a" style="left:120px;top:33px;width:1082px;height:28px;background:#fff;border:1px solid #bdbdbd;border-radius:2px"></div>
<svg class="a" style="left:129px;top:40px" width="11" height="13"><path d="M2.5,6V4A3,3 0 0 1 8.5,4V6" stroke="#0b8043" stroke-width="1.8" fill="none"/><rect x="1" y="5.8" width="9" height="6.5" fill="#0b8043"/></svg>
<div class="a" style="left:148px;top:39px;font-size:13.5px;line-height:17.5px;color:#1b7a47;white-space:nowrap;line-height:17px;letter-spacing:-0.4px">Secure</div>
<div class="a" style="left:198px;top:40px;width:1px;height:15px;background:#b0b0b0"></div>
<div class="a" style="left:207px;top:39px;font-size:14px;line-height:18px;color:#333;white-space:nowrap;line-height:17px;letter-spacing:-0.14px"><span style="color:#1f7346">https</span><span style="color:#888">://</span><span style="color:#222">my.mineo.jp</span><span style="color:#777">/mvno_cp/GCC010301GCC010301_Init.action</span></div>
<svg class="a" style="left:1154px;top:39px" width="44" height="16"><rect x="2" y="1" width="7.5" height="11.6" rx="1" fill="#5f5f5f"/><path d="M8.8,3.5H15.3V14.3H9.2L8.8,12.5Z" stroke="#5f5f5f" stroke-width="1.1" fill="#fff"/><circle cx="5" cy="6.8" r="2.3" fill="none" stroke="#fff" stroke-width="1.3"/><path d="M10.5,6.5L13.5,12.5M13.5,6.5L10.5,12.5" stroke="#777" stroke-width="0.9"/><path d="M34,1.5L36,6.3L41,6.6L37.2,9.8L38.5,14.7L34,12L29.5,14.7L30.8,9.8L27,6.6L32,6.3Z" stroke="#5a5a5a" stroke-width="1.5" fill="none" stroke-linejoin="round"/></svg>
<svg class="a" style="left:1210px;top:37px" width="150" height="20"><rect x="2" y="2" width="16" height="14" fill="#222"/><rect x="2" y="15" width="16" height="2" fill="#5c5"/><circle cx="10" cy="9" r="5" fill="none" stroke="#f3c13a" stroke-width="1.8"/><path d="M7.5,9L9.5,11L14,5" stroke="#fff" stroke-width="1.6" fill="none"/><circle cx="42" cy="9.7" r="6.6" fill="#e6e6e6" stroke="#bdbdbd" stroke-width="1.6"/><circle cx="42" cy="9.7" r="4.2" fill="#a8a8a8"/><circle cx="42" cy="9" r="1.5" fill="#f0f0f0"/><rect x="41.2" y="9.5" width="1.6" height="3.5" fill="#f0f0f0"/><path d="M70.6,1.6H77.4L82.2,6.4V13.2L77.4,18H70.6L65.8,13.2V6.4Z" fill="#c70d2c" stroke="#f4f4f4" stroke-width="0.6"/><text x="74" y="12.6" text-anchor="middle" font-size="7.2" font-weight="bold" font-family="Liberation Sans" fill="#fff" letter-spacing="-0.4">ABP</text><circle cx="106" cy="9.5" r="6.5" fill="#fff" stroke="#f2c94c" stroke-width="2"/><circle cx="105" cy="8.5" r="2.3" fill="none" stroke="#222" stroke-width="1.3"/><path d="M106.5,10L108.8,12.3" stroke="#222" stroke-width="1.5"/><circle cx="138.6" cy="5.6" r="1.5" fill="#5a5a5a"/><circle cx="138.6" cy="10.5" r="1.5" fill="#5a5a5a"/><circle cx="138.6" cy="15.5" r="1.5" fill="#5a5a5a"/></svg>
<svg class="a" style="left:0;top:0" width="30" height="90"><rect x="11" y="68" width="3" height="3" fill="#d14836"/><rect x="16" y="68" width="3" height="3" fill="#d14836"/><rect x="21" y="68" width="3" height="3" fill="#d14836"/><rect x="11" y="73" width="3" height="3" fill="#3b9a54"/><rect x="16" y="73" width="3" height="3" fill="#4285f4"/><rect x="21" y="73" width="3" height="3" fill="#e8b235"/><rect x="11" y="78" width="3" height="3" fill="#3b9a54"/><rect x="16" y="78" width="3" height="3" fill="#e8b235"/><rect x="21" y="78" width="3" height="3" fill="#e8b235"/></svg>
<div class="a" style="left:34px;top:67px;font-size:12px;line-height:16px;color:#222;white-space:nowrap;">Apps</div>
<svg class="a" style="left:73px;top:67px" width="16" height="16"><circle cx="8" cy="8" r="7.1" fill="#e35b22"/><path d="M14.6,5.5A7.1,7.1 0 0 1 12.5,13.5" stroke="#f6c23a" stroke-width="1.6" fill="none"/><circle cx="9.2" cy="6.3" r="4.6" fill="#3a72c4"/><path d="M1.2,7.5 Q1.8,14 8.5,14.6 Q13.8,14 14.3,9 Q12,12.3 8.3,11.6 Q4.8,11 4.6,7.6 Q4.8,5.5 6.5,4.5 Q3,4 1.2,7.5Z" fill="#e35b22"/><path d="M4.6,4.2 Q6,2.6 8,2.4" stroke="#f6a03a" stroke-width="1" fill="none"/></svg>
<div class="a" style="left:97px;top:67px;font-size:12px;line-height:16px;color:#222;white-space:nowrap;">Getting Started</div>
<svg class="a" style="left:191px;top:67px" width="14" height="16"><path d="M1.5,1.5H10.5L12.5,3.5V14.5H1.5Z" fill="#fde48c" stroke="#e9c865" stroke-width="0.9"/><path d="M10,14.5V11.5H12.5" stroke="#e0bd55" stroke-width="0.8" fill="none"/></svg>
<div class="a" style="left:214px;top:67px;font-size:12px;line-height:16px;color:#222;white-space:nowrap;width:112px;overflow:hidden;-webkit-mask-image:linear-gradient(90deg,#000 85%,transparent)">Imported From Firefox</div>
</body></html>
